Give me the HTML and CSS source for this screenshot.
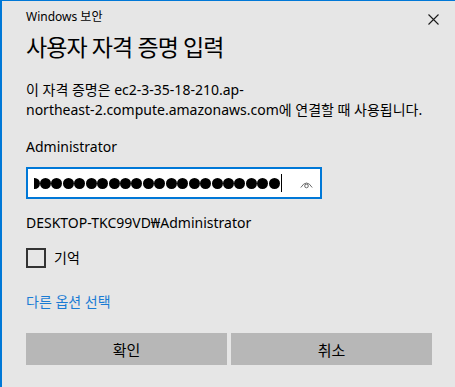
FILE: index.html
```html
<!DOCTYPE html>
<html lang="ko">
<head>
    <meta charset="UTF-8">
    <meta name="viewport" content="width=device-width, initial-scale=1.0">
    <title>Windows 보안</title>
    <link rel="stylesheet" href="styles.css">
</head>
<body>
    <div class="dialog">
        <div class="top-bar">
            <p class="app-name">Windows 보안</p>
            <button class="close-btn" aria-label="닫기">
                <svg width="11" height="11" viewBox="0 0 11 11">
                    <path d="M0.5 0.5 L10.5 10.5 M10.5 0.5 L0.5 10.5" stroke="#1a1a1a" stroke-width="1.1" fill="none"/>
                </svg>
            </button>
        </div>
        <h1 class="heading">사용자 자격 증명 입력</h1>
        <p class="message">이 자격 증명은 ec2-3-35-18-210.ap-<br>northeast-2.compute.amazonaws.com에 연결할 때 사용됩니다.</p>
        <p class="user">Administrator</p>
        <div class="field">
            <div class="dots">
                <span class="dot first"></span>
                <span class="dot"></span><span class="dot"></span><span class="dot"></span><span class="dot"></span>
                <span class="dot"></span><span class="dot"></span><span class="dot"></span><span class="dot"></span>
                <span class="dot"></span><span class="dot"></span><span class="dot"></span><span class="dot"></span>
                <span class="dot"></span><span class="dot"></span><span class="dot"></span><span class="dot"></span>
                <span class="dot"></span><span class="dot"></span><span class="dot"></span><span class="dot"></span>
                <span class="dot"></span>
            </div>
            <span class="caret"></span>
            <svg class="eye" width="13" height="9" viewBox="0 0 13 9">
                <path d="M0.8 7.5 Q6.5 -1.5 12.2 7.5" stroke="#6a6a6a" stroke-width="1" fill="none"/>
                <circle cx="6.5" cy="6" r="1.8" stroke="#6a6a6a" stroke-width="1" fill="none"/>
            </svg>
        </div>
        <p class="domain">DESKTOP-TKC99VD₩Administrator</p>
        <label class="remember">
            <span class="box"></span>
            <span>기억</span>
        </label>
        <a class="more" href="#">다른 옵션 선택</a>
        <div class="actions">
            <button class="btn">확인</button>
            <button class="btn">취소</button>
        </div>
    </div>
</body>
</html>
```

FILE: styles.css
```css
html, body {
    margin: 0;
    padding: 0;
}
body {
    width: 455px;
    height: 387px;
    overflow: hidden;
    background-color: #e6e6e6;
    font-family: "Noto Sans", "Noto Sans CJK KR", sans-serif;
    font-size: 14px;
    color: #000;
}
.dialog {
    box-sizing: border-box;
    height: 387px;
    border-top: 1px solid #0078d7;
    border-left: 2px solid #0078d7;
    padding: 0 23px 0 24px;
    display: flex;
    flex-direction: column;
    align-items: flex-start;
}
p {
    margin: 0;
}
.top-bar {
    align-self: stretch;
    display: flex;
    justify-content: space-between;
    align-items: center;
    margin-top: 8px;
    margin-right: -7px;
}
.app-name {
    font-size: 12px;
    line-height: 16px;
}
.close-btn {
    background: none;
    border: none;
    padding: 0;
    width: 11px;
    height: 11px;
    display: flex;
    margin-top: 5px;
}
.heading {
    margin: 7px 0 0 0;
    font-family: "Noto Sans", "Noto Sans CJK KR", sans-serif;
    font-weight: normal;
    font-size: 23px;
    line-height: 30px;
    letter-spacing: -0.9px;
}
.message {
    margin-top: 18px;
    line-height: 20px;
}
.user {
    margin-top: 17px;
    line-height: 20px;
}
.field {
    box-sizing: border-box;
    margin-top: 10px;
    width: 296px;
    height: 32px;
    border: 2px solid #0078d7;
    background-color: #fff;
    display: flex;
    align-items: center;
    padding-left: 6px;
}
.dots {
    display: flex;
    gap: 0.45px;
    overflow: hidden;
}
.dot {
    flex: none;
    width: 11px;
    height: 11px;
    border-radius: 50%;
    background-color: #000;
}
.dot.first {
    margin-left: -5.5px;
}
.caret {
    width: 1px;
    height: 18px;
    background-color: #000;
    margin-left: 1px;
}
.eye {
    margin-left: auto;
    margin-right: 7px;
    margin-top: 2px;
}
.domain {
    margin-top: 14px;
    line-height: 20px;
}
.remember {
    margin-top: 15px;
    display: flex;
    align-items: center;
    gap: 8px;
    line-height: 20px;
}
.box {
    box-sizing: border-box;
    width: 20px;
    height: 20px;
    border: 2px solid #333;
}
.more {
    margin-top: 24px;
    line-height: 20px;
    color: #1a7cd4;
    text-decoration: none;
}
.actions {
    align-self: stretch;
    margin-top: 21px;
    display: grid;
    grid-template-columns: 1fr 1fr;
    gap: 4px;
}
.btn {
    height: 32px;
    border: none;
    background-color: #b7b7b7;
    font-family: inherit;
    font-size: 15px;
    color: #000;
    padding: 0;
}
```
